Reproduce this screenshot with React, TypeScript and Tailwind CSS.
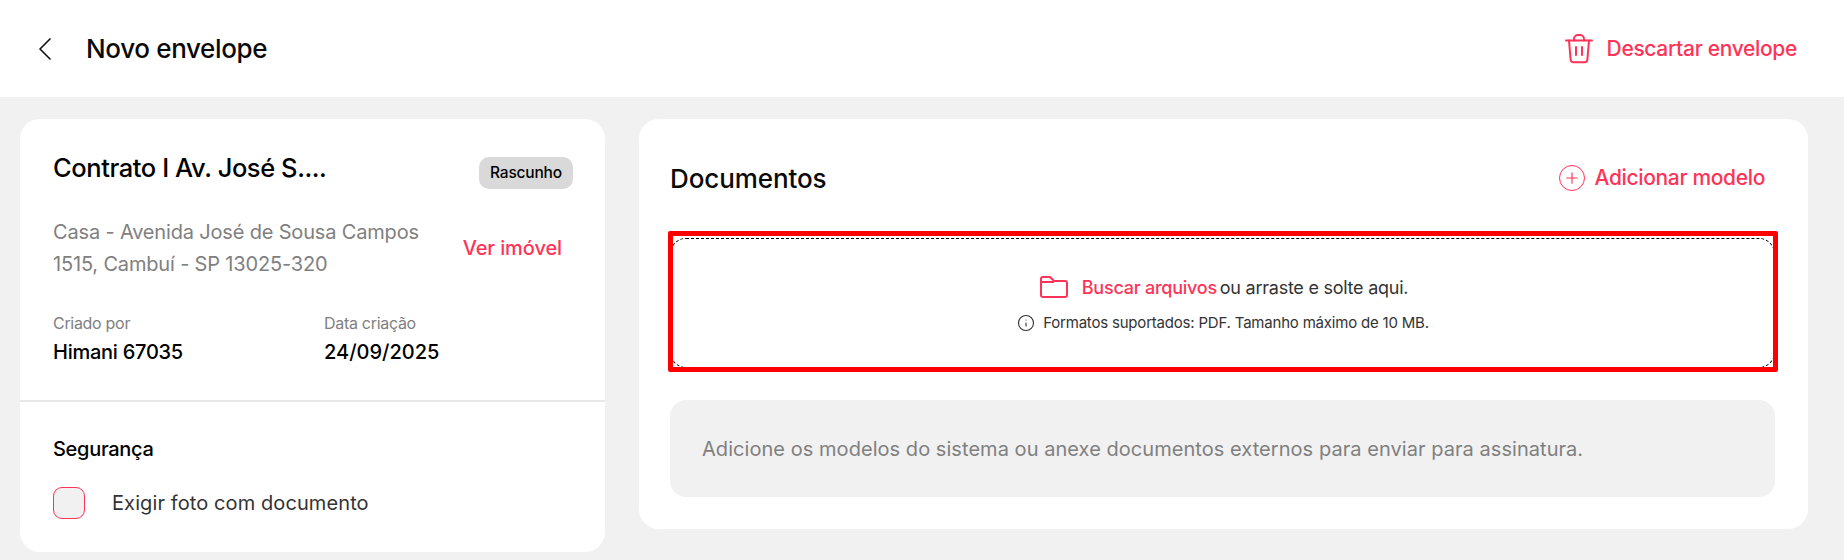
import { ChevronLeft, Info, Plus } from 'lucide-react'

const font = { fontFamily: 'Inter, sans-serif' }

function TrashIcon() {
  return (
    <svg width="28" height="30" viewBox="0 0 28 30" fill="none" stroke="#ff3358" strokeWidth="2" strokeLinecap="round" strokeLinejoin="round">
      <path d="M1 6.5h26" />
      <path d="M9 6.5V5a4 4 0 0 1 4-4h2a4 4 0 0 1 4 4v1.5" />
      <path d="M4 6.5l1.6 19a3 3 0 0 0 3 2.8h10.8a3 3 0 0 0 3-2.8l1.6-19" />
      <path d="M11 13v8M17 13v8" />
    </svg>
  )
}

function FolderIcon() {
  return (
    <svg width="28" height="22" viewBox="0 0 28 22" fill="none" stroke="#ff3358" strokeWidth="2" strokeLinejoin="round">
      <path d="M1 3a2 2 0 0 1 2-2h7l4 4h11a2 2 0 0 1 2 2v12a2 2 0 0 1-2 2H3a2 2 0 0 1-2-2V3z" />
      <path d="M1 6h13" />
    </svg>
  )
}

export default function App() {
  return (
    <div className="h-[560px] w-[1844px] overflow-hidden bg-[#f1f1f1]" style={font}>
      <header className="flex h-[97px] items-center justify-between bg-white pl-[25px] pr-[47px]">
        <div className="flex items-center">
          <ChevronLeft className="h-10 w-10 text-[#111]" strokeWidth={1} />
          <h1 className="ml-[21px] text-[26px] font-medium tracking-[-0.35px] text-[#0a0a0a]">Novo envelope</h1>
        </div>
        <button className="flex items-center gap-[14px] text-[21px] font-medium tracking-[-0.33px] text-[#ff3358]">
          <TrashIcon />
          Descartar envelope
        </button>
      </header>

      <main className="flex items-start gap-[34px] pl-[20px] pt-[22px]">
        <section className="h-[433px] w-[585px] rounded-[20px] bg-white">
          <div className="h-[283px] border-b-2 border-[#e8e8e8] pl-[33px] pr-[32px]">
            <div className="flex items-start justify-between pt-[34px]">
              <h2 className="text-[25.5px] leading-[30px] font-medium tracking-[-0.42px] text-black">Contrato I Av. José S....</h2>
              <span className="mt-[4px] flex h-[32px] w-[94px] items-center justify-center rounded-[10px] bg-[#d9d9d9] text-[15.5px] font-medium tracking-[-0.2px] text-black">Rascunho</span>
            </div>
            <div className="mt-[27px] flex items-center justify-between pr-[11px]">
              <p className="w-[380px] text-[20px] leading-[32px] tracking-[-0.17px] text-[#808080]">
                Casa - Avenida José de Sousa Campos 1515, Cambuí - SP 13025-320
              </p>
              <a className="text-[20px] font-medium tracking-[-0.1px] text-[#ff3358]">Ver imóvel</a>
            </div>
            <div className="mt-[31px] flex">
              <div className="w-[271px]">
                <div className="text-[16px] leading-[24px] tracking-[-0.3px] text-[#808080]">Criado por</div>
                <div className="mt-[3px] text-[20px] leading-[28px] font-medium tracking-[-0.25px] text-black">Himani 67035</div>
              </div>
              <div>
                <div className="text-[16px] leading-[24px] tracking-[-0.3px] text-[#808080]">Data criação</div>
                <div className="mt-[3px] text-[20px] leading-[28px] font-medium tracking-[0px] text-black">24/09/2025</div>
              </div>
            </div>
          </div>
          <div className="px-[33px] pt-[33px]">
            <h3 className="text-[20px] leading-[28px] font-medium tracking-[-0.3px] text-black">Segurança</h3>
            <label className="mt-[24px] flex items-center gap-[27px]">
              <span className="h-[32px] w-[32px] rounded-[9px] border border-[#ff3358] bg-[#f1f1f1]" />
              <span className="text-[20px] tracking-[0.1px] text-[#333]">Exigir foto com documento</span>
            </label>
          </div>
        </section>

        <section className="h-[410px] w-[1169px] rounded-[20px] bg-white pl-[31px] pr-[33px] pt-[43px]">
          <div className="flex h-[32px] items-center justify-between pr-[10px]">
            <h2 className="text-[26px] font-medium tracking-[-0.1px] text-[#0a0a0a]">Documentos</h2>
            <button className="flex items-center gap-[10px] text-[21px] font-medium tracking-[-0.35px] text-[#ff3358]">
              <span className="flex h-[26px] w-[26px] items-center justify-center rounded-full border-[1.5px] border-[#ff3358]">
                <Plus className="h-[18px] w-[18px]" strokeWidth={1.5} />
              </span>
              Adicionar modelo
            </button>
          </div>

          <div className="relative mt-[44px] flex h-[130px] flex-col items-center justify-center rounded-[16px] border border-dashed border-black pt-[2px]">
            <div className="flex items-center pl-[3px] text-[18px] tracking-[-0.25px] text-[#333]">
              <FolderIcon />
              <span className="ml-[14px] font-medium text-[#ff3358]">Buscar arquivos</span>
              <span className="ml-[3px]">ou arraste e solte aqui.</span>
            </div>
            <div className="mt-[11px] flex items-center pl-[1px] text-[15px] tracking-[-0.2px] text-[#333]">
              <Info className="h-[18px] w-[18px]" strokeWidth={1.5} />
              <span className="ml-[8px]">Formatos suportados: PDF. Tamanho máximo de 10 MB.</span>
            </div>
            <div className="absolute -top-[8px] -right-[4px] -bottom-[5px] -left-[3px] rounded-[2px] border-[5px] border-[#ff0000]" />
          </div>

          <div className="mt-[32px] flex h-[97px] items-center rounded-[16px] bg-[#f1f1f1] px-[32px] text-[20px] tracking-[0.05px] text-[#808080]">
            Adicione os modelos do sistema ou anexe documentos externos para enviar para assinatura.
          </div>
        </section>
      </main>
    </div>
  )
}
